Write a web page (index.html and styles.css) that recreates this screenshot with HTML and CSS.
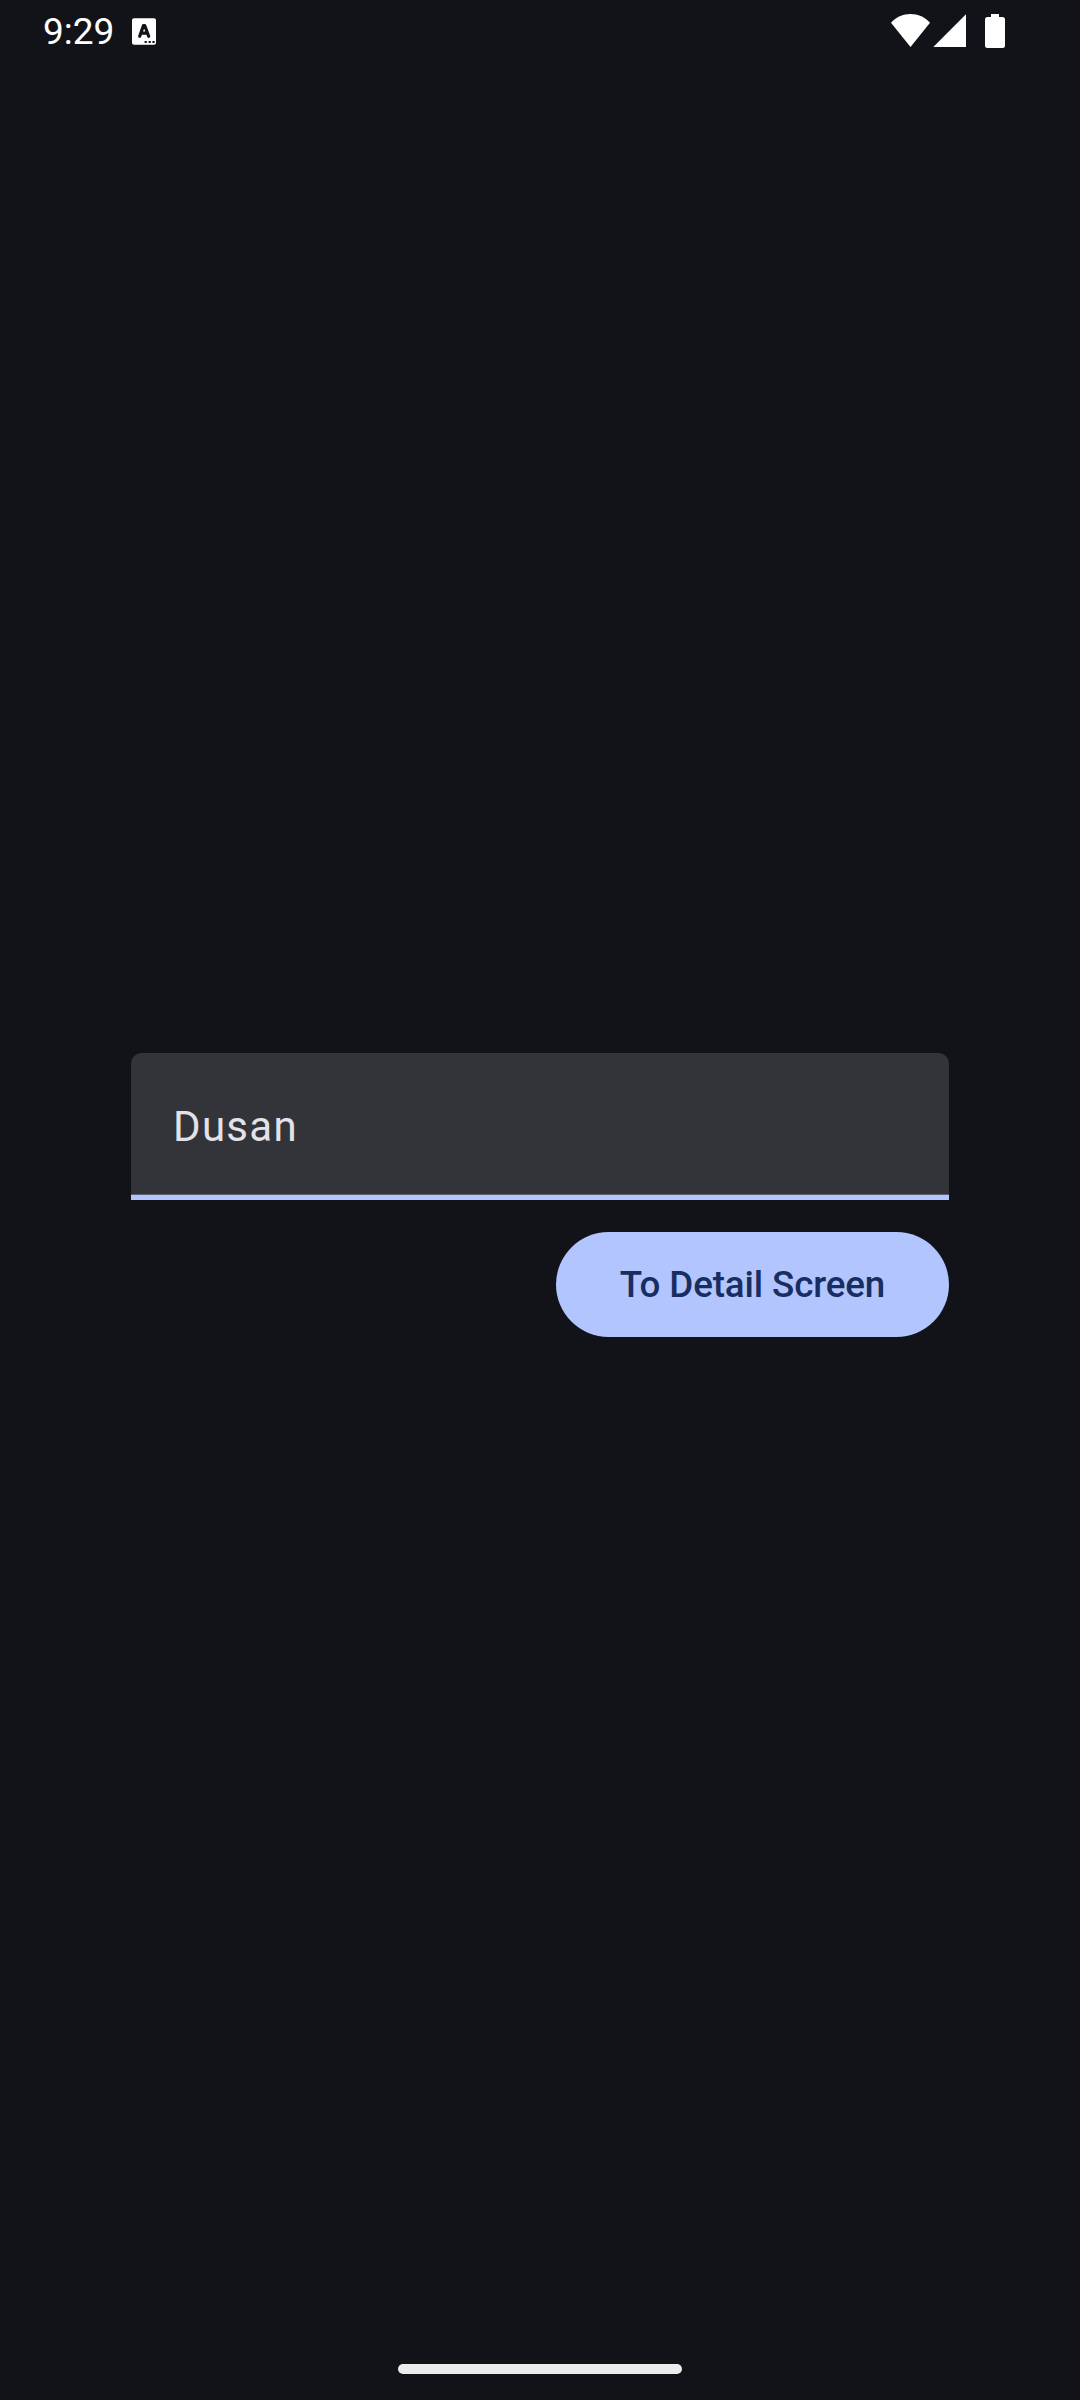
FILE: index.html
```html
<!DOCTYPE html>
<html lang="en">
<head>
<meta charset="utf-8">
<title>Name</title>
<link rel="stylesheet" href="styles.css">
</head>
<body>
<div class="screen">
  <header class="status-bar">
    <span class="clock">9:29</span>
    <svg class="notification" width="24" height="27" viewBox="0 0 24 27" aria-hidden="true">
      <rect y="0.3" width="24" height="26.4" rx="2" fill="#fff"/>
      <path d="M7.700 18.300L11.400 7.700h1.400L16.700 18.300M9 15.200h6.500" fill="none" stroke="#121318" stroke-width="3.200" stroke-linecap="round" stroke-linejoin="round"/>
      <path d="M12.600 24h2.200M16.600 24h2.200M20.400 24h2.200" stroke="#121318" stroke-width="2"/>
    </svg>
    <svg class="system-icons" width="114" height="34" viewBox="0 0 114 34" fill="#fff" aria-hidden="true">
      <path d="M0 8.800C5 3.200 12 0 19.500 0S34 3.200 39 8.800L19.500 33Z"/>
      <path d="M42.300 33L75 .2V33Z"/>
      <path d="M100 0h8v3h3.500a2.500 2.500 0 0 1 2.500 2.500v26a2.500 2.500 0 0 1-2.500 2.500h-15a2.500 2.500 0 0 1-2.500-2.500v-26a2.500 2.500 0 0 1 2.500-2.500H100Z"/>
    </svg>
  </header>
  <main class="content">
    <input class="name-field" type="text" value="Dusan" aria-label="Name">
    <button class="detail-button" type="button">To Detail Screen</button>
  </main>
  <footer class="navigation"><div class="handle"></div></footer>
</div>
</body>
</html>
```
FILE: styles.css
```css
* {
  box-sizing: border-box;
}

body {
  margin: 0;
  background: #121318;
  font-family: Roboto, sans-serif;
}

.screen {
  display: flex;
  flex-direction: column;
  width: 1080px;
  height: 2400px;
}

.status-bar {
  display: flex;
  align-items: flex-start;
  height: 63px;
  padding: 14px 75px 0 43px;
  color: #fff;
}

.clock {
  width: 89px;
  margin-top: -4px;
  font-size: 37px;
  line-height: 43px;
}

.notification {
  margin-top: 4px;
}

.system-icons {
  margin-left: auto;
}

.content {
  flex: 1;
  display: flex;
  flex-direction: column;
  align-items: flex-end;
  gap: 32px;
  padding: 990px 131px 0;
}

.name-field {
  width: 100%;
  height: 147px;
  padding: 5px 42px 0;
  border: 0;
  border-bottom: 5px solid #b2c5ff;
  border-radius: 0;
  outline: 0;
  background: #333439;
  box-shadow: inset 0 -1px #5d6070;
  clip-path: inset(0 round 10.5px 10.5px 0 0);
  color: #e3e2e9;
  font: 400 42px/63px Roboto, sans-serif;
  letter-spacing: 1.3125px;
}

.detail-button {
  width: 393px;
  height: 105px;
  padding: 0;
  border: 0;
  border-radius: 53px;
  background: #b2c5ff;
  color: #182e60;
  font: 500 36.75px/52px Roboto, sans-serif;
  letter-spacing: -0.13px;
}

.navigation {
  display: flex;
  justify-content: center;
  height: 63px;
  padding-top: 27px;
}

.handle {
  width: 284px;
  height: 10px;
  border-radius: 5px;
  background: #ececec;
}
```
